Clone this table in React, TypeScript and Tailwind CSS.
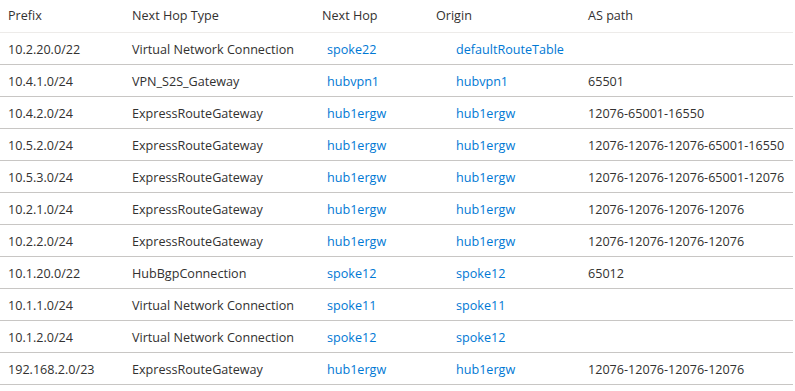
const routes = [
  { prefix: "10.2.20.0/22", type: "Virtual Network Connection", hop: "spoke22", origin: "defaultRouteTable", path: "" },
  { prefix: "10.4.1.0/24", type: "VPN_S2S_Gateway", hop: "hubvpn1", origin: "hubvpn1", path: "65501" },
  { prefix: "10.4.2.0/24", type: "ExpressRouteGateway", hop: "hub1ergw", origin: "hub1ergw", path: "12076-65001-16550" },
  { prefix: "10.5.2.0/24", type: "ExpressRouteGateway", hop: "hub1ergw", origin: "hub1ergw", path: "12076-12076-12076-65001-16550" },
  { prefix: "10.5.3.0/24", type: "ExpressRouteGateway", hop: "hub1ergw", origin: "hub1ergw", path: "12076-12076-12076-65001-12076" },
  { prefix: "10.2.1.0/24", type: "ExpressRouteGateway", hop: "hub1ergw", origin: "hub1ergw", path: "12076-12076-12076-12076" },
  { prefix: "10.2.2.0/24", type: "ExpressRouteGateway", hop: "hub1ergw", origin: "hub1ergw", path: "12076-12076-12076-12076" },
  { prefix: "10.1.20.0/22", type: "HubBgpConnection", hop: "spoke12", origin: "spoke12", path: "65012" },
  { prefix: "10.1.1.0/24", type: "Virtual Network Connection", hop: "spoke11", origin: "spoke11", path: "" },
  { prefix: "10.1.2.0/24", type: "Virtual Network Connection", hop: "spoke12", origin: "spoke12", path: "" },
  { prefix: "192.168.2.0/23", type: "ExpressRouteGateway", hop: "hub1ergw", origin: "hub1ergw", path: "12076-12076-12076-12076" },
];

const cols = "grid grid-cols-[124px_190px_114px_152px_213px]";

export default function App() {
  return (
    <div className="w-[795px] h-[391px] bg-white text-[#323130] text-[12.6px] font-['Open_Sans',sans-serif] overflow-hidden">
      <div className="w-[793px]">
        <div className={`${cols} h-[33px] items-center border-b border-[#edebe9]`}>
          <div className="pl-2">Prefix</div>
          <div className="pl-2">Next Hop Type</div>
          <div className="pl-2">Next Hop</div>
          <div className="pl-2">Origin</div>
          <div className="pl-2">AS path</div>
        </div>
        {routes.map((r) => (
          <div key={r.prefix} className={`${cols} h-[32px] pt-[3px] items-center border-b border-[#c8c6c4]`}>
            <div className="pl-2">{r.prefix}</div>
            <div className="pl-2">{r.type}</div>
            <div className="pl-[13px] text-[#0078d4]">{r.hop}</div>
            <div className="pl-[28px] text-[#0078d4]">{r.origin}</div>
            <div className="pl-2">{r.path}</div>
          </div>
        ))}
      </div>
    </div>
  );
}
